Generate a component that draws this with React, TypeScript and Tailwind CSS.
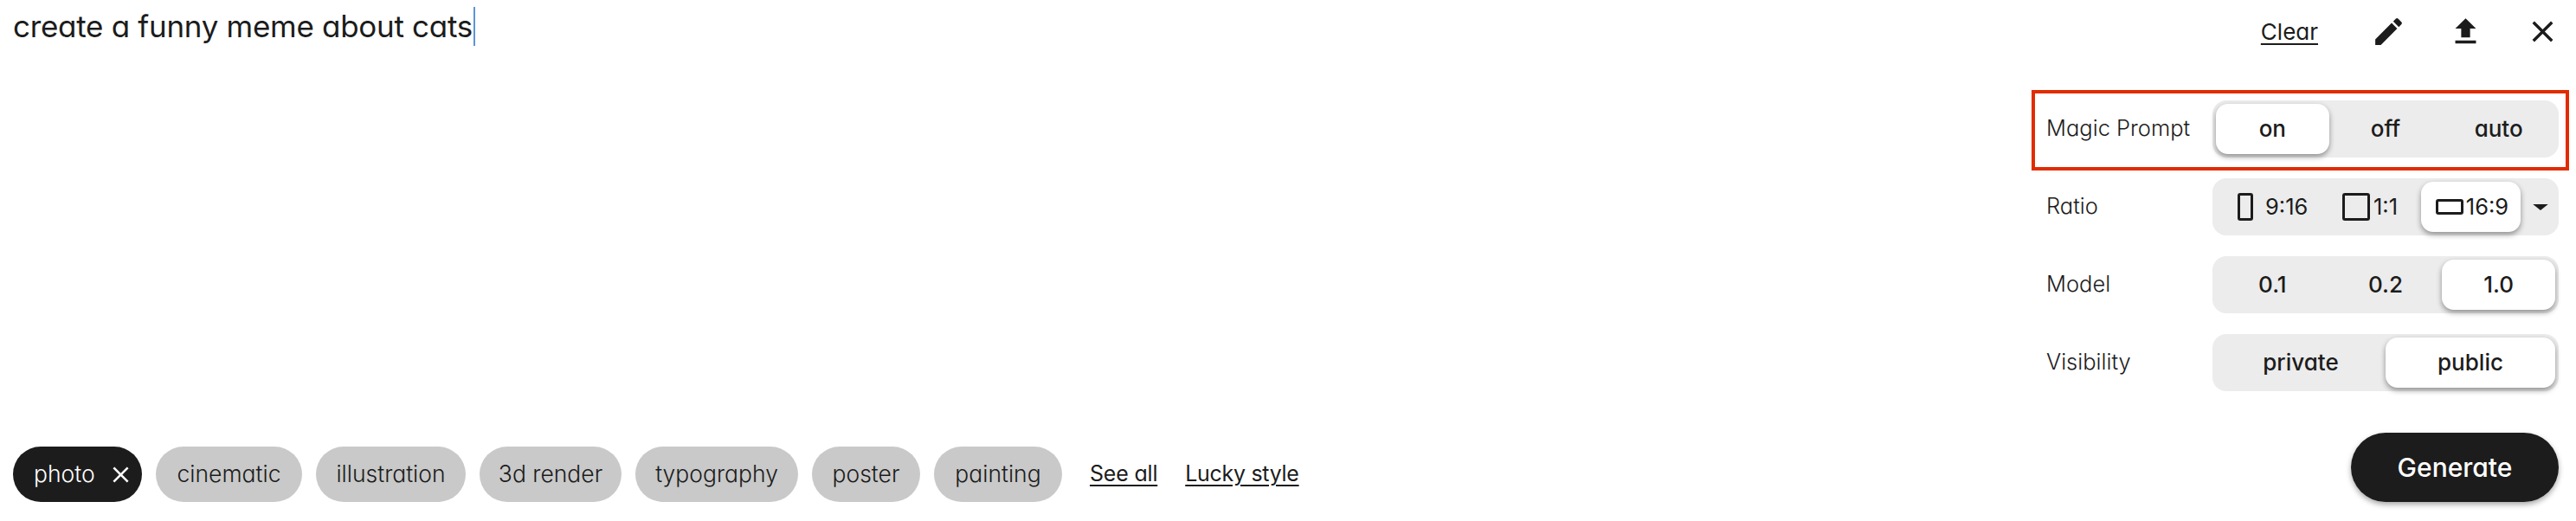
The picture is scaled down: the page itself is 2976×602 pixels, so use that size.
import React from "react";

const FONT = "font-['Inter','Liberation_Sans',sans-serif] [font-feature-settings:'cv11']";

function Seg({ items, active, cols }: { items: string[]; active: number; cols: string }) {
  return (
    <div className={`grid h-[66px] w-[400px] rounded-[16px] bg-[#ececec] p-1 ${cols}`}>
      {items.map((label, i) => (
        <div
          key={label}
          className={`flex items-center justify-center rounded-[14px] pb-px text-[26px] font-[450] text-[#1c1c1c] ${
            i === active ? "bg-white shadow-[0_3px_6px_rgba(0,0,0,0.4)]" : ""
          }`}
        >
          {label}
        </div>
      ))}
    </div>
  );
}

function Row({ label, children, boxed }: { label: string; children: React.ReactNode; boxed?: boolean }) {
  return (
    <div className="relative flex h-[66px] w-[592px] items-center justify-between">
      <span className="pb-px text-[25.5px] font-light text-[#1c1c1c]">{label}</span>
      {children}
      {boxed && (
        <div className="pointer-events-none absolute -bottom-[15px] -left-[17px] -right-[12px] -top-[12px] border-4 border-[#e02c00]" />
      )}
    </div>
  );
}

function Chip({ children, width }: { children: React.ReactNode; width: string }) {
  return (
    <div className={`flex h-16 items-center justify-center rounded-[32px] bg-[#c9c9c9] text-[26.5px] font-light text-[#1c1c1c] ${width}`}>
      {children}
    </div>
  );
}

const CLOSE = "M19 6.41 17.59 5 12 10.59 6.41 5 5 6.41 10.59 12 5 17.59 6.41 19 12 13.41 17.59 19 19 17.59 13.41 12z";

export default function App() {
  return (
    <div className={`flex h-[602px] w-[2976px] flex-col justify-between overflow-hidden bg-white pb-[22px] ${FONT}`}>
      <div className="flex items-start justify-between">
        <div className="flex items-start pl-[15px] pt-[8px]">
          <span className="text-[35px] leading-[45px] tracking-[-0.3px] text-[#1c1c1c]">create a funny meme about cats</span>
          <span className="ml-px h-[45px] w-[2px] bg-[#5b95d5]" />
        </div>
        <div className="flex flex-col items-end pr-5">
          <div className="-mr-[2px] flex h-[72px] w-full items-center justify-end">
            <a className="mr-[61px] text-[26px] font-normal text-[#1c1c1c] underline underline-offset-4">Clear</a>
            <svg viewBox="0 0 24 24" className="mr-[48px] h-[41px] w-[41px] fill-[#1c1c1c]">
              <path d="M3 17.25V21h3.75L17.81 9.94l-3.75-3.75L3 17.25zM20.71 7.04a.996.996 0 0 0 0-1.41l-2.34-2.34a.996.996 0 0 0-1.41 0l-1.83 1.83 3.75 3.75 1.83-1.83z" />
            </svg>
            <svg viewBox="0 0 24 24" className="mr-[48px] h-[41px] w-[41px] fill-[#1c1c1c]">
              <path d="M9 16h6v-6h4l-7-7-7 7h4zm-4 2h14v2H5z" />
            </svg>
            <svg viewBox="0 0 24 24" className="h-[41px] w-[41px] fill-[#1c1c1c]">
              <path d={CLOSE} />
            </svg>
          </div>
          <div className="mt-[44px] flex flex-col gap-6">
            <Row label="Magic Prompt" boxed>
              <Seg items={["on", "off", "auto"]} active={0} cols="grid-cols-3" />
            </Row>
            <Row label="Ratio">
              <div className="flex h-[66px] w-[400px] items-center rounded-[16px] bg-[#ececec] p-1 text-[25.5px] text-[#1c1c1c]">
                <div className="flex h-full w-[119px] items-center gap-[14px] pl-[25px]">
                  <span className="h-[32px] w-[18px] rounded-[3px] border-[3px] border-[#1c1c1c]" />
                  <span>9:16</span>
                </div>
                <div className="flex h-full w-[118px] items-center justify-center gap-1">
                  <span className="h-[32px] w-[32px] rounded-[3px] border-[3px] border-[#1c1c1c]" />
                  <span>1:1</span>
                </div>
                <div className="flex h-full w-[115px] items-center justify-center gap-[3px] rounded-[14px] bg-white pl-[3px] shadow-[0_3px_6px_rgba(0,0,0,0.4)]">
                  <span className="h-[18px] w-[32px] rounded-[3px] border-[3px] border-[#1c1c1c]" />
                  <span>16:9</span>
                </div>
                <svg viewBox="0 0 20 8" className="ml-[13px] h-[7px] w-[20px] fill-[#1c1c1c]">
                  <path d="M0 0h20L10 8z" />
                </svg>
              </div>
            </Row>
            <Row label="Model">
              <Seg items={["0.1", "0.2", "1.0"]} active={2} cols="grid-cols-3" />
            </Row>
            <Row label="Visibility">
              <Seg items={["private", "public"]} active={1} cols="grid-cols-2" />
            </Row>
          </div>
        </div>
      </div>
      <div className="flex items-end justify-between pl-[15px] pr-5">
        <div className="flex h-16 items-center gap-4">
          <div className="flex h-16 w-[149px] items-center gap-[14px] rounded-[32px] bg-[#1c1c1c] pl-6 text-[26.5px] font-light text-white">
            <span>photo</span>
            <svg viewBox="0 0 24 24" className="h-[31px] w-[31px] fill-white">
              <path d={CLOSE} />
            </svg>
          </div>
          <Chip width="w-[169px]">cinematic</Chip>
          <Chip width="w-[173px]">illustration</Chip>
          <Chip width="w-[164px]">3d render</Chip>
          <Chip width="w-[188px]">typography</Chip>
          <Chip width="w-[125px]">poster</Chip>
          <Chip width="w-[148px]">painting</Chip>
          <a className="ml-4 text-[25px] font-normal tracking-[-0.2px] text-[#1c1c1c] underline underline-offset-4">See all</a>
          <a className="ml-4 text-[25px] font-normal tracking-[-0.3px] text-[#1c1c1c] underline underline-offset-4">Lucky style</a>
        </div>
        <div className="flex h-20 w-[240px] items-center justify-center rounded-[40px] bg-[#1c1c1c] text-[30px] font-medium text-white shadow-[0_3px_6px_rgba(0,0,0,0.35)]">
          Generate
        </div>
      </div>
    </div>
  );
}
